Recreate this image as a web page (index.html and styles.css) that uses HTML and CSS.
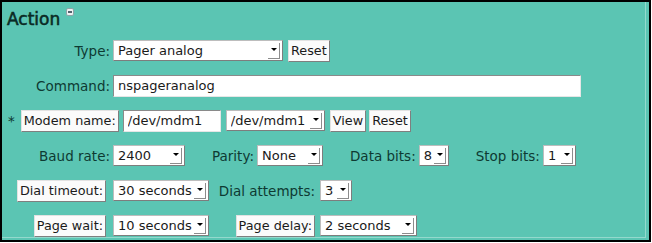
FILE: index.html
```html
<!DOCTYPE html>
<html>
<head>
<meta charset="UTF-8">
<title>Action</title>
<link rel="stylesheet" href="styles.css">
</head>
<body>
<div class="panel">
  <div class="inner">
    <h2 class="title">Action<svg class="toggle" width="8" height="8" viewBox="0 0 8 8"><rect x="0.5" y="0.5" width="7" height="7" rx="1.5" fill="#eef3f3" stroke="#8fa3a8"/><line x1="2" y1="4" x2="6" y2="4" stroke="#2c3e4a" stroke-width="1.6"/></svg></h2>

    <div class="row">
      <label class="key">Type:</label>
      <span class="sel"><select class="w-type"><option>Pager analog</option></select></span>
      <button class="btn gap5">Reset</button>
    </div>

    <div class="row">
      <label class="key">Command:</label>
      <input class="txt w-cmd" type="text" value="nspageranalog">
    </div>

    <div class="row">
      <span class="star">*</span>
      <button class="btn">Modem name:</button>
      <input class="txt w-dev gap4" type="text" value="/dev/mdm1">
      <span class="sel gap5"><select class="w-devsel"><option>/dev/mdm1</option></select></span>
      <button class="btn gap5">View</button>
      <button class="btn gap3">Reset</button>
    </div>

    <div class="row">
      <label class="key">Baud rate:</label>
      <span class="sel"><select class="w-baud"><option>2400</option></select></span>
      <label class="lbl">Parity:</label>
      <span class="sel"><select class="w-parity"><option>None</option></select></span>
      <label class="lbl">Data bits:</label>
      <span class="sel"><select class="w-bits"><option>8</option></select></span>
      <label class="lbl">Stop bits:</label>
      <span class="sel"><select class="w-stop"><option>1</option></select></span>
    </div>

    <div class="row">
      <div class="key k-btn"><button class="btn">Dial timeout:</button></div>
      <span class="sel"><select class="w-secs"><option>30 seconds</option></select></span>
      <label class="key k-mid">Dial attempts:</label>
      <span class="sel"><select class="w-tries"><option>3</option></select></span>
    </div>

    <div class="row">
      <div class="key k-btn"><button class="btn">Page wait:</button></div>
      <span class="sel"><select class="w-secs"><option>10 seconds</option></select></span>
      <div class="key k-mid"><button class="btn">Page delay:</button></div>
      <span class="sel"><select class="w-delay"><option>2 seconds</option></select></span>
    </div>
  </div>
</div>
</body>
</html>
```

FILE: styles.css
```css
html,body{margin:0;padding:0;background:#fff;}
body{font-family:"DejaVu Sans",Verdana,sans-serif;}

.panel{
  width:651px;
  height:242px;
  box-sizing:border-box;
  border:2px solid #000;
  background:#5bc5b3;
}
.inner{
  width:644px;
  height:236px;
  box-sizing:border-box;
  border-right:1px solid rgba(255,255,255,.35);
  border-bottom:1px solid rgba(255,255,255,.35);
}
.title{
  margin:0;
  height:31px;
  box-sizing:border-box;
  padding:6px 0 0 5px;
  font-size:17px;
  line-height:20px;
  font-weight:normal;
  color:#0a2a24;
  -webkit-text-stroke:0.55px #0a2a24;
}
.toggle{
  margin-left:6px;
  vertical-align:9px;
}

.row{
  display:flex;
  align-items:center;
  height:35px;
  font-size:13.5px;
  color:#0e3a32;
}
.key{
  flex:none;
  width:108px;
  margin-right:3px;
  text-align:right;
}
.key.k-btn{width:104px;margin-right:7px;}
.key.k-mid{width:106px;margin-right:5px;}
.lbl{margin:0 3px 0 27px;}
.star{margin:0 6px;}

/* form controls */
.btn{
  height:22px;
  box-sizing:border-box;
  margin:0;
  padding:0 2px;
  font:12.8px "DejaVu Sans",Verdana,sans-serif;
  color:#1a1a1a;
  background:#fbfbfb;
  border:1px solid;
  border-color:#e2e2e2 #7f7f7f #7f7f7f #e2e2e2;
  border-radius:0;
}
.txt{
  height:22px;
  box-sizing:border-box;
  margin:0;
  padding:0 4px;
  font:13px "DejaVu Sans",Verdana,sans-serif;
  color:#1a1a1a;
  background:#fff;
  border:1px solid;
  border-color:#8a8a8a #e6e6e6 #e6e6e6 #8a8a8a;
  border-radius:0;
  outline:none;
}
.sel{
  position:relative;
  display:inline-block;
  flex:none;
}
.sel select{
  display:block;
  -webkit-appearance:none;
  appearance:none;
  height:21px;
  box-sizing:border-box;
  margin:0;
  padding:0 15px 0 4px;
  font:13px "DejaVu Sans",Verdana,sans-serif;
  color:#1a1a1a;
  background:#fff;
  border:1px solid;
  border-color:#bdbdbd #7d7d7d #7d7d7d #bdbdbd;
  border-radius:0;
}
.sel:before{
  content:"";
  position:absolute;
  right:3px;
  top:3px;
  bottom:2px;
  width:12px;
  box-sizing:border-box;
  border-right:1px solid #8c8c8c;
  border-bottom:1px solid #8c8c8c;
}
.sel:after{
  content:"";
  position:absolute;
  right:6px;
  top:8px;
  border-left:3px solid transparent;
  border-right:3px solid transparent;
  border-top:3px solid #000;
}

.w-type{width:170px;}
.w-cmd{width:468px;}
.w-dev{width:98px;}
.w-devsel{width:99px;}
.w-baud{width:72px;}
.w-parity{width:66px;}
.w-bits{width:30px;}
.w-stop{width:33px;}
.w-secs{width:96px;}
.w-tries{width:32px;}
.w-delay{width:97px;}

.gap3{margin-left:3px;}
.gap4{margin-left:4px;}
.gap5{margin-left:5px;}
```
